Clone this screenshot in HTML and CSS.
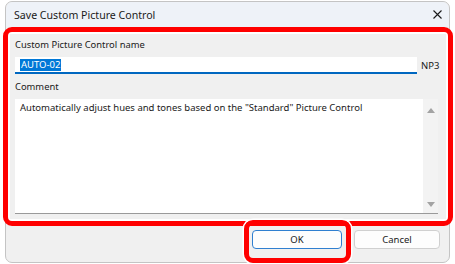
FILE: index.html
```html
<!DOCTYPE html>
<html lang="en">
<head>
  <meta charset="UTF-8" />
  <title>Save Custom Picture Control</title>
  <link rel="stylesheet" href="styles.css">
</head>
<body>

<div class="window">
  <div class="titlebar">
    <span class="title">Save Custom Picture Control</span>
    <svg class="close" width="9" height="9" viewBox="0 0 9 9">
      <path d="M0.5 0.5 L8.5 8.5 M8.5 0.5 L0.5 8.5" stroke="#1a1a1a" stroke-width="1.1" fill="none"/>
    </svg>
  </div>

  <div class="highlight">
    <div class="panel">
      <div class="label">Custom Picture Control name</div>
      <div class="name-row">
        <div class="input"><span class="sel">AUTO-02</span></div>
        <span class="ext">NP3</span>
      </div>
      <div class="label comment-label">Comment</div>
      <div class="textarea">
        <div class="text">Automatically adjust hues and tones based on the "Standard" Picture Control</div>
        <div class="scrollbar">
          <svg width="8" height="5" viewBox="0 0 8 5"><path d="M4 0 L8 5 L0 5 Z" fill="#a3a3a3"/></svg>
          <svg width="8" height="5" viewBox="0 0 8 5"><path d="M0 0 L8 0 L4 5 Z" fill="#a3a3a3"/></svg>
        </div>
      </div>
    </div>
  </div>

  <div class="footer">
    <div class="ok-ring"><button class="btn ok">OK</button></div>
    <button class="btn">Cancel</button>
  </div>
</div>

</body>
</html>
```

FILE: styles.css
```css
body { margin: 0; background: #fff; font-family: "Noto Sans", "Open Sans", sans-serif; color: #1a1a1a; }
.window { margin: 1px 0 0 5px; width: 445px; height: 262px; box-sizing: border-box; border: 1px solid #c4c4c4; border-radius: 7px; background: #f0f0f0; }
.titlebar { height: 25px; display: flex; align-items: center; justify-content: space-between; padding: 0 8px 0 8px; background: #eef2f8; border-radius: 7px 7px 0 0; }
.title { font-size: 10.6px; }
.close { margin-right: -1px; }
.highlight { margin: 0 -4px 0 -3px; border: 5px solid #ff0000; border-radius: 9px; background: #fff; padding: 2px; }
.panel { background: #f0f0f0; padding: 4px 0 5px 5px; }
.label { font-size: 9.4px; line-height: 14px; }
.name-row { display: flex; align-items: center; margin-top: 5px; }
.input { width: 402px; height: 17px; box-sizing: border-box; background: #fff; border-bottom: 2px solid #0067c0; padding: 2px 0 0 5px; display: flex; align-items: flex-start; }
.sel { background: #0078d7; color: #fff; font-size: 9.5px; line-height: 12px; padding: 0 1px; }
.ext { font-size: 9.5px; margin-left: 4px; }
.comment-label { margin-top: 6px; }
.textarea { margin-top: 5px; width: 423px; height: 115px; box-sizing: border-box; background: #fff; border-bottom: 1px solid #9a9a9a; display: flex; }
.text { flex: 1; font-size: 9.5px; line-height: 14px; padding: 2px 0 0 5px; }
.scrollbar { width: 15px; background: #f3f3f3; display: flex; flex-direction: column; justify-content: space-between; align-items: center; padding: 9px 0 6px; }
.footer { display: flex; justify-content: flex-end; gap: 12px; padding: 4px 9px 0 0; }
.btn { height: 19px; width: 86px; font-family: inherit; font-size: 9.5px; color: #1a1a1a; background: #fdfdfd; border: 1px solid #d0d0d0; border-radius: 4px; padding: 0; }
.btn.ok { width: 90px; border-color: #2f7fd0; }
.ok-ring { position: relative; border: 5px solid #ff0000; border-radius: 9px; padding: 5px 4px 9px 3px; margin: -10px -9px -14px -8px; box-shadow: 0 0 0 1.5px #fff; display: flex; }
```
